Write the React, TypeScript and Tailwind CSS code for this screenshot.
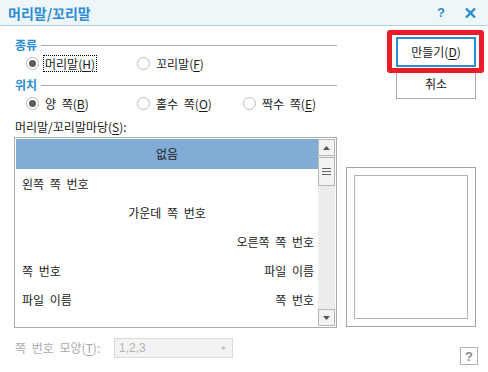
import React from 'react';

const sansKr = "font-['Noto_Sans_CJK_KR','Noto_Sans',sans-serif]";

function Radio({ label, mnemonic, checked, focused }: { label: string; mnemonic: string; checked?: boolean; focused?: boolean }) {
  return (
    <div className="flex items-center h-[18px]">
      <span className="w-[13px] h-[13px] rounded-full border border-[#b9b9b9] bg-white flex items-center justify-center shrink-0">
        {checked && <span className="w-[7px] h-[7px] rounded-full bg-[#5c5c5c]"></span>}
      </span>
      <span
        className={
          'ml-[4px] leading-[15px] px-[1px] ' +
          (focused ? 'border border-dotted border-black' : 'border border-transparent')
        }
      >
        {label}(<u className="underline-offset-2">{mnemonic}</u>)
      </span>
    </div>
  );
}

function SectionHeader({ title }: { title: string }) {
  return (
    <div className="flex items-center h-[14px]">
      <span className="pl-[1px] text-[12px] font-bold text-[#2a8cd2] leading-[14px]">{title}</span>
      <span className="flex-1 ml-[4px] h-px bg-[#ababab]"></span>
    </div>
  );
}

export default function App() {
  return (
    <div className={`w-[488px] h-[372px] bg-white flex flex-col text-[12px] text-[#1a1a1a] overflow-hidden [word-spacing:3px] ${sansKr}`}>
      {/* Title bar */}
      <div className="h-[26px] shrink-0 bg-[#eef6fa] border-b border-[#a9d0e8] flex items-center pl-[8px] pr-[12px]">
        <span className="text-[14px] font-bold text-[#2a8cd2] leading-[16px] [word-spacing:0px]">머리말/꼬리말</span>
        <span className="ml-auto text-[13px] font-bold text-[#2a8cd2] leading-[16px] font-['Liberation_Sans',sans-serif]">?</span>
        <svg className="ml-[20px]" width="11" height="10" viewBox="0 0 11 10">
          <path d="M1 0.5 L10 9.5 M10 0.5 L1 9.5" stroke="#2a8cd2" strokeWidth="2.4" />
        </svg>
      </div>

      <div className="flex flex-1">
        {/* Left column */}
        <div className="w-[323px] ml-[14px] flex flex-col">
          <div className="mt-[12px]">
            <SectionHeader title="종류" />
          </div>
          <div className="mt-[2px] flex pl-[12px]">
            <div className="w-[111px]">
              <Radio label="머리말" mnemonic="H" checked focused />
            </div>
            <Radio label="꼬리말" mnemonic="F" />
          </div>

          <div className="mt-[6px]">
            <SectionHeader title="위치" />
          </div>
          <div className="mt-[2px] flex pl-[12px]">
            <div className="w-[111px]">
              <Radio label="양 쪽" mnemonic="B" checked />
            </div>
            <div className="w-[106px]">
              <Radio label="홀수 쪽" mnemonic="O" />
            </div>
            <Radio label="짝수 쪽" mnemonic="E" />
          </div>

          <div className="mt-[7px] h-[16px] leading-[16px] pl-[1px]">
            머리말/꼬리말마당(<u className="underline-offset-2">S</u>):
          </div>

          {/* List box */}
          <div className="mt-[2px] h-[191px] border border-[#ababab] p-[1px] flex">
            <div className="flex-1 flex flex-col">
              <div className="h-[30px] bg-[#80acd6] flex items-center justify-center">없음</div>
              <div className="h-[29px] flex items-center px-[6px]">왼쪽 쪽 번호</div>
              <div className="h-[29px] flex items-center justify-center">가운데 쪽 번호</div>
              <div className="h-[29px] flex items-center justify-end pr-[4px]">오른쪽 쪽 번호</div>
              <div className="h-[29px] flex items-center justify-between pl-[6px] pr-[4px]">
                <span>쪽 번호</span>
                <span>파일 이름</span>
              </div>
              <div className="h-[29px] flex items-center justify-between pl-[6px] pr-[4px]">
                <span>파일 이름</span>
                <span>쪽 번호</span>
              </div>
            </div>
            {/* Scrollbar */}
            <div className="w-[17px] bg-[#ededed] flex flex-col">
              <div className="h-[17px] border border-[#b6b6b6] bg-[#f3f3f3] flex items-center justify-center">
                <svg width="7" height="4" viewBox="0 0 7 4">
                  <path d="M0 4 L3.5 0 L7 4 Z" fill="#555" />
                </svg>
              </div>
              <div className="mt-[1px] h-[29px] border border-[#b6b6b6] bg-[#f3f3f3] flex flex-col items-center justify-center gap-[2px]">
                <span className="w-[9px] h-px bg-[#666]"></span>
                <span className="w-[9px] h-px bg-[#666]"></span>
                <span className="w-[9px] h-px bg-[#666]"></span>
              </div>
              <div className="mt-auto h-[17px] border border-[#b6b6b6] bg-[#f3f3f3] flex items-center justify-center">
                <svg width="7" height="4" viewBox="0 0 7 4">
                  <path d="M0 0 L3.5 4 L7 0 Z" fill="#555" />
                </svg>
              </div>
            </div>
          </div>

          {/* Page number format */}
          <div className="mt-[10px] flex items-center h-[20px]">
            <span className="pl-[1px] text-[#a9a9a9] leading-[16px]">
              쪽 번호 모양(<u className="underline-offset-2">T</u>):
            </span>
            <div className="ml-auto mr-[104px] w-[119px] h-[20px] border border-[#d9d9d9] bg-[#f3f3f3] flex items-center pl-[4px] pr-[6px] text-[#b3b3b3]">
              <span className="font-['Liberation_Sans',sans-serif]">1,2,3</span>
              <svg className="ml-auto" width="5" height="3" viewBox="0 0 5 3">
                <path d="M0 0 L2.5 3 L5 0 Z" fill="#bdbdbd" />
              </svg>
            </div>
          </div>
        </div>

        {/* Right column */}
        <div className="flex-1 flex flex-col items-end">
          <div className="relative mt-[11px] mr-[12px]">
            <button className="w-[80px] h-[30px] border-2 border-[#2b8fd1] bg-white flex items-center justify-center">
              만들기(<u className="underline-offset-2">D</u>)
            </button>
            <span className="absolute left-[-9px] right-[-8px] top-[-7px] bottom-[-6px] border-[5px] border-[#ea1c2a] rounded-[3px] z-10 pointer-events-none"></span>
          </div>
          <button className="mt-[2px] mr-[12px] w-[80px] h-[30px] border border-[#ababab] bg-white flex items-center justify-center">
            취소
          </button>

          <div className="mt-[68px] mr-[12px] w-[130px] h-[160px] border border-[#a5a5a5] p-[7px]">
            <div className="w-full h-full border border-[#b3b3b3]"></div>
          </div>

          <div className="mt-[20px] mr-[10px] w-[18px] h-[18px] border border-[#b0b0b0] flex items-center justify-center text-[13px] font-bold text-[#8a8a8a] font-['Liberation_Sans',sans-serif] leading-none">
            ?
          </div>
        </div>
      </div>
    </div>
  );
}
